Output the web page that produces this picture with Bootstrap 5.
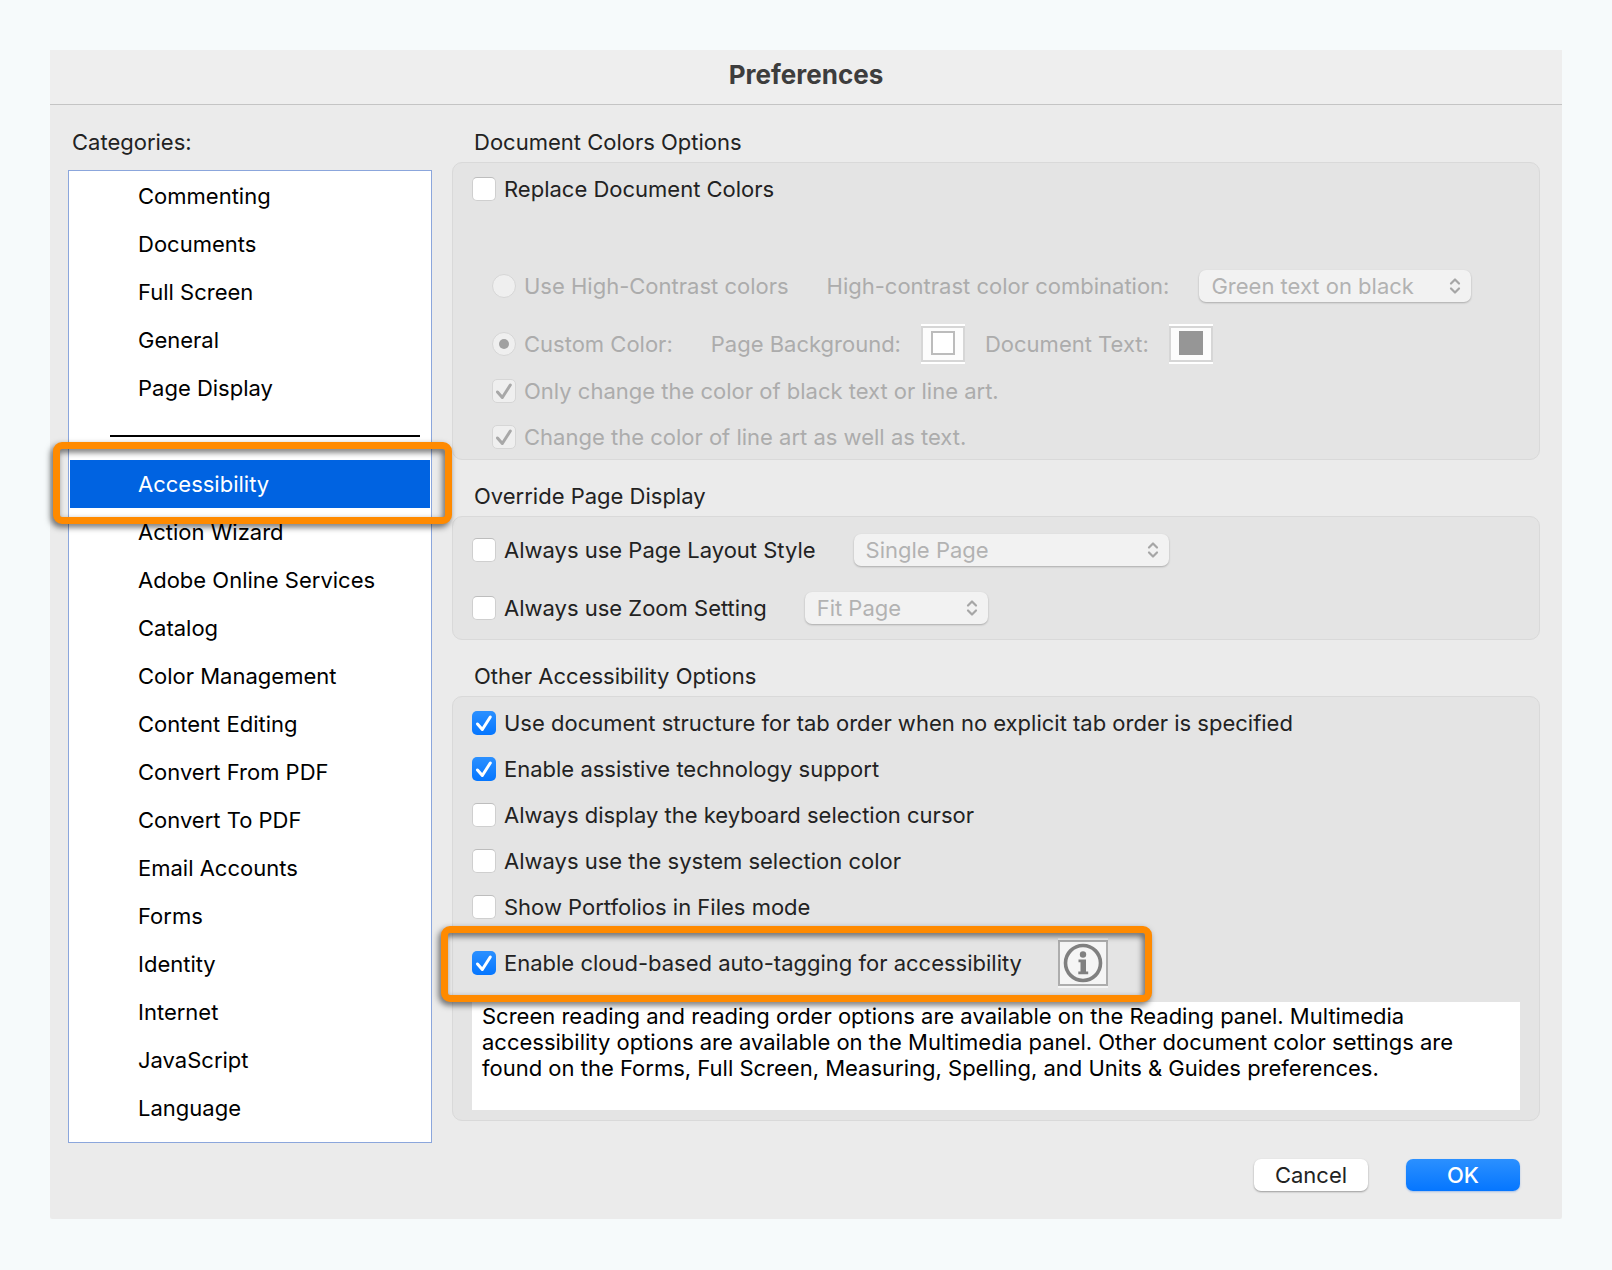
<!DOCTYPE html>
<html lang="en">
<head>
<meta charset="utf-8">
<meta name="viewport" content="width=device-width, initial-scale=1">
<title>Preferences</title>
<link rel="stylesheet" href="https://cdn.jsdelivr.net/npm/bootstrap@5.3.0/dist/css/bootstrap.min.css">
<style>
  body { background: #f6fafb; font-family: Inter, "Liberation Sans", sans-serif; font-size: 22px; line-height: 26px; color: #222; }
  .prefs { margin: 50px; background: #ebebeb; border-radius: 2px; }
  .prefs-title { height: 55px; background: #eee; border-bottom: 1px solid #c4c4c4; }
  .prefs-title h1 { font-size: 26px; line-height: 50px; font-weight: 700; color: #3d3d3d; }
  .prefs-body { padding: 24px 22px 28px 18px; gap: 20px; }
  .cats { width: 364px; }
  .cats h2, .pane h2 { font-size: 22px; line-height: 26px; font-weight: 400; margin: 0; }
  .cats h2 { padding-left: 4px; margin-bottom: 15px; }
  .cat-list { background: #fff; border: 1px solid #8ba6dc; border-radius: 0; padding: 1px 1px 10px; }
  .cat-list .list-group-item { height: 48px; padding: 11px 0 11px 68px; border: 0; color: #000; background: none; line-height: 26px; }
  .cat-list .list-group-item.active { background: #0063e1; color: #fff; margin: 0; z-index: 3; }
  .cat-list .divider { padding: 23px 10px 0 40px; }
  .divider hr { margin: 0; border-top: 2px solid #000; opacity: 1; }
  .callout { position: absolute; border: 7px solid #ff8a00; border-radius: 9px; filter: drop-shadow(-2px 3px 3px rgba(0,0,0,.6)); pointer-events: none; z-index: 4; }
  .callout-cat { inset: -18px -22px -16px -17px; }
  .callout-tag { inset: -12px -44px -14px -31px; }
  .pane h2 { padding-left: 22px; margin-bottom: 7px; }
  .group { background: #e4e4e4; border: 1px solid #d9d9d9; border-radius: 10px; padding: 14px 19px 10px; }
  .group + h2 { margin-top: 23px; }
  .tick { min-height: 24px; padding: 0; margin: 0; gap: 8px; line-height: 24px; }
  .tick .form-check-input { float: none; flex: none; width: 24px; height: 24px; margin: 0; background-color: #fff; border: 1px solid #cfcfcf; border-top-color: #bdbdbd; background-size: 24px 24px; background-position: center; }
  .tick .form-check-input[type=checkbox] { border-radius: 5px; }
  .tick .form-check-input[type=checkbox]:checked { border: 0; background-color: #0a7aff;
    background-image: url("data:image/svg+xml,%3Csvg xmlns='http://www.w3.org/2000/svg' viewBox='0 0 24 24'%3E%3Cpath d='M5.500 13l4.800 5.500L18.300 6' fill='none' stroke='%23fff' stroke-width='3' stroke-linecap='round' stroke-linejoin='round'/%3E%3C/svg%3E"), linear-gradient(#2b90ff, #0576ff); }
  .tick .form-check-input:disabled { opacity: 1; background-color: #efefef; border: 1px solid #d6d6d6; }
  .tick .form-check-input[type=checkbox]:checked:disabled { background-color: #efefef; border: 1px solid #d6d6d6;
    background-image: url("data:image/svg+xml,%3Csvg xmlns='http://www.w3.org/2000/svg' viewBox='0 0 24 24'%3E%3Cpath d='M5.500 13l4.800 5.500L18.300 6' fill='none' stroke='%23a8a8a8' stroke-width='3' stroke-linecap='round' stroke-linejoin='round'/%3E%3C/svg%3E"); }
  .tick .form-check-input[type=radio]:checked:disabled {
    background-image: url("data:image/svg+xml,%3Csvg xmlns='http://www.w3.org/2000/svg' viewBox='0 0 24 24'%3E%3Ccircle cx='12' cy='12' r='5' fill='%23a0a0a0'/%3E%3C/svg%3E"); }
  .tick .form-check-input:disabled ~ .form-check-label, .dim { opacity: 1; color: #acacac; }
  .spaced { gap: 38px; }
  .popup { width: auto; height: 32px; padding: 0 40px 0 12px; font-size: 22px; line-height: 32px; border: 0; border-radius: 7px; box-shadow: 0 1px 2px rgba(0,0,0,.25);
    background-size: 12px 18px; background-position: right 10px center;
    background-image: url("data:image/svg+xml,%3Csvg xmlns='http://www.w3.org/2000/svg' viewBox='0 0 12 18'%3E%3Cpath d='M2 6.500l4-4 4 4M2 11.500l4 4 4-4' fill='none' stroke='%23a6a6a6' stroke-width='2.200' stroke-linecap='round' stroke-linejoin='round'/%3E%3C/svg%3E"); }
  .popup:disabled { background-color: #f2f2f2; color: #b2b2b2; opacity: 1; }
  .popup-contrast { width: 272px; }
  .popup-layout { width: 315px; }
  .popup-zoom { width: 183px; }
  .contrast-set { gap: 30px; }
  .wells { gap: 20px; }
  .well { width: 44px; height: 40px; padding: 2px 0; border: 0; background: #e4e4e4; border-top: 2px solid #fff; border-bottom: 2px solid #fff; }
  .well-face { height: 36px; border: 2px solid #d6d6d6; background: #fcfcfc; margin-top: -2px; padding-top: 3px; }
  .chip { display: block; width: 24px; height: 24px; margin: 0 auto; border: 2px solid #bcbcbc; background: #fff; }
  .chip-dark { background: #969696; border-color: #969696; }
  .sub { padding-left: 20px; }
  .row-contrast { margin-top: 69px; }
  .row-custom { margin-top: 22px; }
  .line-art { margin-top: 15px; gap: 22px; }
  .override { padding: 17px 19px 15px; gap: 26px; }
  .others { gap: 22px; }
  .auto-tag { margin-top: 19px; gap: 36px; }
  .info-btn { width: 50px; height: 50px; padding: 0; border: 0; background: #f6f6f6; border-top: 2px solid #f4f4f4; border-bottom: 2px solid #f4f4f4; }
  .info-btn svg { display: block; }
  .notes { background: #fff; color: #000; padding: 1px 10px 29px; margin: 14px 0 0; }
  .actions { margin-top: 38px; padding-right: 20px; gap: 38px; }
  .actions .btn { width: 114px; height: 32px; padding: 0; border: 0; border-radius: 7px; font-size: 22px; line-height: 32px; }
  .btn-cancel { background: #fff; color: #222; box-shadow: 0 1px 2px rgba(0,0,0,.35); }
  .btn-ok { background: linear-gradient(#2b90ff, #0576ff); color: #fff; font-weight: 500; box-shadow: 0 1px 2px rgba(0,90,220,.3); }
</style>
<script src="https://cdn.jsdelivr.net/npm/bootstrap@5.3.0/dist/js/bootstrap.bundle.min.js"></script>
</head>
<body>
<main class="prefs">
  <header class="prefs-title text-center"><h1 class="m-0">Preferences</h1></header>
  <div class="prefs-body d-flex align-items-start">
    <nav class="cats flex-shrink-0" aria-labelledby="cats-title">
      <h2 id="cats-title">Categories:</h2>
      <div class="cat-list list-group">
        <a href="#" class="list-group-item">Commenting</a>
        <a href="#" class="list-group-item">Documents</a>
        <a href="#" class="list-group-item">Full Screen</a>
        <a href="#" class="list-group-item">General</a>
        <a href="#" class="list-group-item">Page Display</a>
        <div class="list-group-item divider"><hr></div>
        <a href="#" class="list-group-item active" aria-current="true">Accessibility<span class="callout callout-cat"></span></a>
        <a href="#" class="list-group-item">Action Wizard</a>
        <a href="#" class="list-group-item">Adobe Online Services</a>
        <a href="#" class="list-group-item">Catalog</a>
        <a href="#" class="list-group-item">Color Management</a>
        <a href="#" class="list-group-item">Content Editing</a>
        <a href="#" class="list-group-item">Convert From PDF</a>
        <a href="#" class="list-group-item">Convert To PDF</a>
        <a href="#" class="list-group-item">Email Accounts</a>
        <a href="#" class="list-group-item">Forms</a>
        <a href="#" class="list-group-item">Identity</a>
        <a href="#" class="list-group-item">Internet</a>
        <a href="#" class="list-group-item">JavaScript</a>
        <a href="#" class="list-group-item">Language</a>
      </div>
    </nav>

    <form class="pane flex-grow-1">
      <h2>Document Colors Options</h2>
      <section class="group">
        <div class="tick form-check d-flex align-items-center">
          <input class="form-check-input" type="checkbox" id="replace"><label class="form-check-label" for="replace">Replace Document Colors</label>
        </div>
        <div class="sub">
          <div class="row-contrast spaced d-flex align-items-center">
            <div class="tick form-check d-flex align-items-center">
              <input class="form-check-input" type="radio" name="scheme" id="contrast" disabled><label class="form-check-label" for="contrast">Use High-Contrast colors</label>
            </div>
            <div class="contrast-set d-flex align-items-center">
              <label class="dim" for="combo">High-contrast color combination:</label>
              <select class="popup popup-contrast form-select" id="combo" disabled><option>Green text on black</option></select>
            </div>
          </div>
          <div class="row-custom spaced d-flex align-items-center">
            <div class="tick form-check d-flex align-items-center">
              <input class="form-check-input" type="radio" name="scheme" id="custom" checked disabled><label class="form-check-label" for="custom">Custom Color:</label>
            </div>
            <div class="wells d-flex align-items-center">
              <label class="dim" for="bgwell">Page Background:</label>
              <button type="button" class="well" id="bgwell" disabled><span class="well-face d-block"><span class="chip"></span></span></button>
              <label class="dim" for="fgwell">Document Text:</label>
              <button type="button" class="well" id="fgwell" disabled><span class="well-face d-block"><span class="chip chip-dark"></span></span></button>
            </div>
          </div>
          <div class="line-art d-flex flex-column">
            <div class="tick form-check d-flex align-items-center">
              <input class="form-check-input" type="checkbox" id="black" checked disabled><label class="form-check-label" for="black">Only change the color of black text or line art.</label>
            </div>
            <div class="tick form-check d-flex align-items-center">
              <input class="form-check-input" type="checkbox" id="lineart" checked disabled><label class="form-check-label" for="lineart">Change the color of line art as well as text.</label>
            </div>
          </div>
        </div>
      </section>

      <h2>Override Page Display</h2>
      <section class="group override d-flex flex-column">
        <div class="spaced d-flex align-items-center">
          <div class="tick form-check d-flex align-items-center">
            <input class="form-check-input" type="checkbox" id="layout"><label class="form-check-label" for="layout">Always use Page Layout Style</label>
          </div>
          <select class="popup popup-layout form-select" aria-label="Page layout style" disabled><option>Single Page</option></select>
        </div>
        <div class="spaced d-flex align-items-center">
          <div class="tick form-check d-flex align-items-center">
            <input class="form-check-input" type="checkbox" id="zoom"><label class="form-check-label" for="zoom">Always use Zoom Setting</label>
          </div>
          <select class="popup popup-zoom form-select" aria-label="Zoom setting" disabled><option>Fit Page</option></select>
        </div>
      </section>

      <h2>Other Accessibility Options</h2>
      <section class="group">
        <div class="others d-flex flex-column">
          <div class="tick form-check d-flex align-items-center">
            <input class="form-check-input" type="checkbox" id="taborder" checked><label class="form-check-label" for="taborder">Use document structure for tab order when no explicit tab order is specified</label>
          </div>
          <div class="tick form-check d-flex align-items-center">
            <input class="form-check-input" type="checkbox" id="assistive" checked><label class="form-check-label" for="assistive">Enable assistive technology support</label>
          </div>
          <div class="tick form-check d-flex align-items-center">
            <input class="form-check-input" type="checkbox" id="cursor"><label class="form-check-label" for="cursor">Always display the keyboard selection cursor</label>
          </div>
          <div class="tick form-check d-flex align-items-center">
            <input class="form-check-input" type="checkbox" id="syscolor"><label class="form-check-label" for="syscolor">Always use the system selection color</label>
          </div>
          <div class="tick form-check d-flex align-items-center">
            <input class="form-check-input" type="checkbox" id="portfolios"><label class="form-check-label" for="portfolios">Show Portfolios in Files mode</label>
          </div>
        </div>
        <div class="d-flex">
          <div class="auto-tag d-flex align-items-center position-relative">
            <div class="tick form-check d-flex align-items-center">
              <input class="form-check-input" type="checkbox" id="autotag" checked><label class="form-check-label" for="autotag">Enable cloud-based auto-tagging for accessibility</label>
            </div>
            <button type="button" class="info-btn" aria-label="About auto-tagging">
              <svg width="50" height="46" viewBox="0 0 50 46" aria-hidden="true">
                <rect x="1" y="1" width="48" height="44" fill="#f5f5f5" stroke="#adadad" stroke-width="2"/>
                <circle cx="25" cy="23" r="17.500" fill="none" stroke="#808080" stroke-width="3.600"/>
                <circle cx="25" cy="14.500" r="3.200" fill="#808080"/>
                <path d="M20.500 19.500h7.500v12h2.200v2.800h-9.900v-2.800h2.200v-9.200h-2z" fill="#808080"/>
              </svg>
            </button>
            <span class="callout callout-tag"></span>
          </div>
        </div>
        <p class="notes">Screen reading and reading order options are available on the Reading panel. Multimedia accessibility options are available on the Multimedia panel. Other document color settings are found on the Forms, Full Screen, Measuring, Spelling, and Units &amp; Guides preferences.</p>
      </section>
      <div class="actions d-flex justify-content-end">
        <button type="button" class="btn btn-cancel">Cancel</button>
        <button type="submit" class="btn btn-ok">OK</button>
      </div>
    </form>
  </div>
</main>
</body>
</html>
